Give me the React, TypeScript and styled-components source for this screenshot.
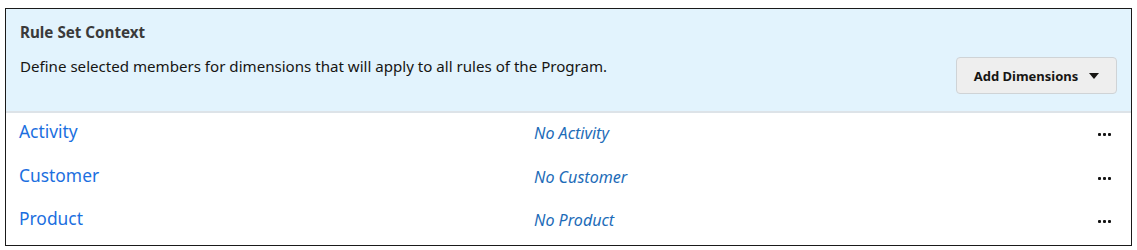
import React from "react";
import styled, { createGlobalStyle } from "styled-components";

const Global = createGlobalStyle`
  html, body { margin: 0; padding: 0; background: #ffffff; }
  body { font-family: "Noto Sans", "Open Sans", Arial, sans-serif; }
`;

const Page = styled.div`
  padding: 8px 6px 0 5px;
`;

const Frame = styled.div`
  width: 1127px;
  height: 238px;
  box-sizing: border-box;
  border: 1px solid #1a1a1a;
  display: flex;
  flex-direction: column;
`;

const Header = styled.div`
  background: #e2f3fd;
  border-bottom: 2px solid #dde3e8;
  height: 104px;
  box-sizing: border-box;
  padding: 13px 14px 0 14px;
  display: flex;
  align-items: flex-start;
  justify-content: space-between;
`;

const HeaderText = styled.div`
  display: flex;
  flex-direction: column;
  gap: 14px;
`;

const Title = styled.div`
  font-size: 15.2px;
  font-weight: 700;
  color: #3a3a3a;
  line-height: 20px;
`;

const Description = styled.div`
  font-size: 15.1px;
  color: #161513;
  line-height: 20px;
`;

const Button = styled.button`
  margin-top: 35px;
  width: 161px;
  height: 37px;
  box-sizing: border-box;
  background: #eeeeee;
  border: 1px solid #cfd3d6;
  border-radius: 4px;
  display: flex;
  align-items: center;
  justify-content: center;
  gap: 11px;
  font-family: inherit;
  font-size: 13px;
  font-weight: 700;
  color: #161513;
  padding: 0;
`;

const Rows = styled.div`
  display: flex;
  flex-direction: column;
`;

const Row = styled.div`
  height: 43.5px;
  display: grid;
  grid-template-columns: 515px 1fr 40px;
  align-items: start;
  padding: 6px 0 0 13px;
  box-sizing: border-box;
`;

const Name = styled.a`
  font-size: 17.4px;
  color: #1b6fe0;
  line-height: 24px;
  text-decoration: none;
`;

const Value = styled.span`
  font-size: 16.1px;
  font-style: italic;
  color: #1d6cb8;
  line-height: 24px;
  padding-top: 2px;
`;

const More = styled.div`
  display: flex;
  gap: 2px;
  padding-top: 14px;
  padding-left: 7px;
`;

const Dot = styled.span`
  width: 3px;
  height: 3px;
  background: #141414;
  border-radius: 1px;
`;

const Caret = () => (
  <svg width="10" height="6" viewBox="0 0 10 6">
    <path d="M0 0 L10 0 L5 6 Z" fill="#161513" />
  </svg>
);

const rows = [
  { name: "Activity", value: "No Activity" },
  { name: "Customer", value: "No Customer" },
  { name: "Product", value: "No Product" },
];

export default function App() {
  return (
    <>
      <Global />
      <Page>
        <Frame>
          <Header>
            <HeaderText>
              <Title>Rule Set Context</Title>
              <Description>
                Define selected members for dimensions that will apply to all rules of the Program.
              </Description>
            </HeaderText>
            <Button>
              Add Dimensions <Caret />
            </Button>
          </Header>
          <Rows>
            {rows.map((r) => (
              <Row key={r.name}>
                <Name href="#">{r.name}</Name>
                <Value>{r.value}</Value>
                <More>
                  <Dot />
                  <Dot />
                  <Dot />
                </More>
              </Row>
            ))}
          </Rows>
        </Frame>
      </Page>
    </>
  );
}
